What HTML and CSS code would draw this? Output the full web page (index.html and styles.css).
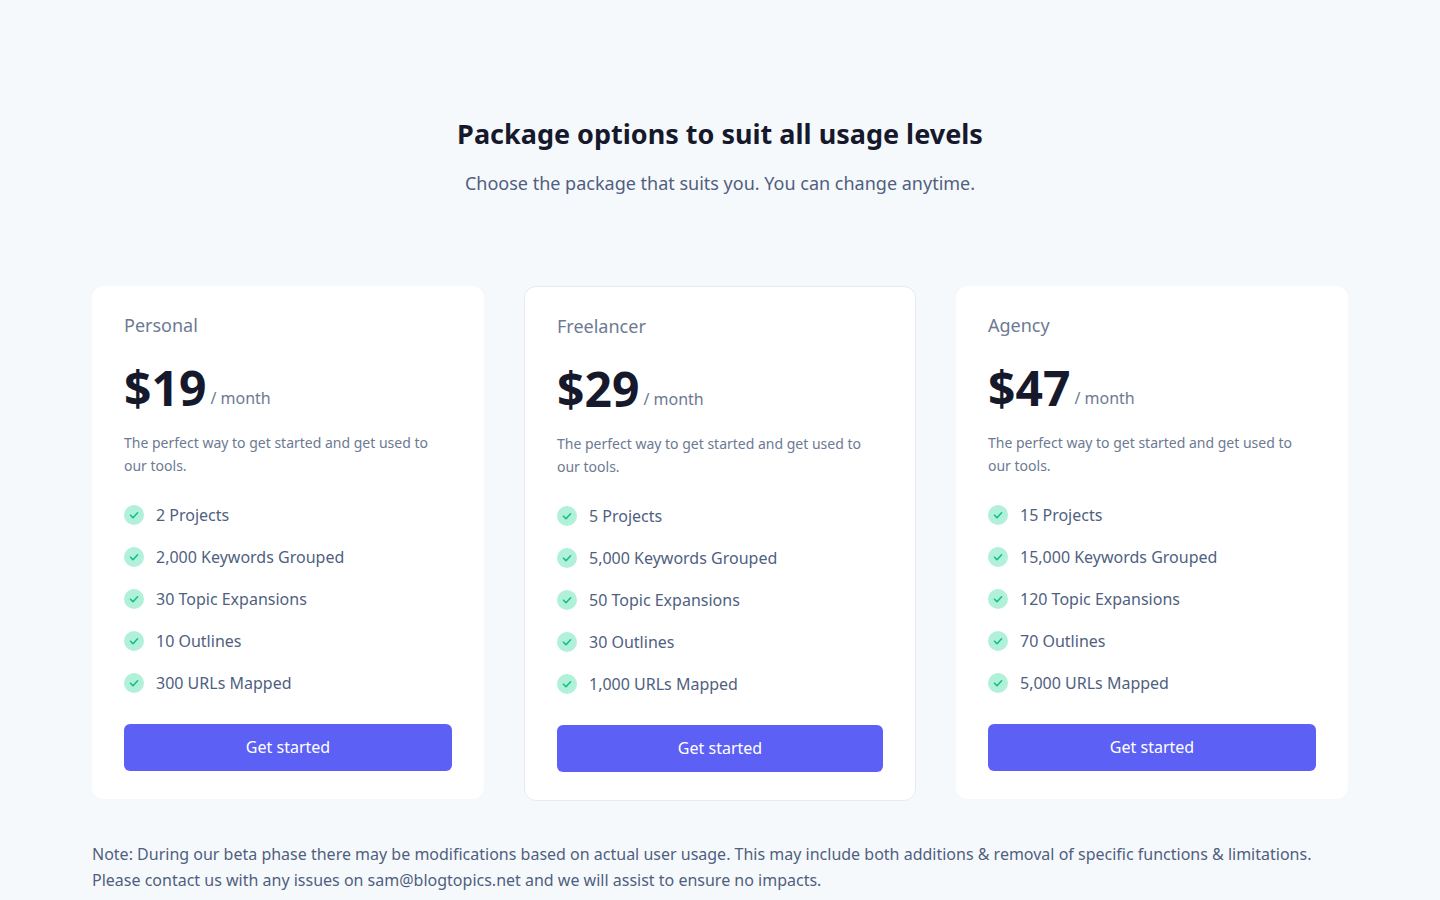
FILE: index.html
```html
<!DOCTYPE html>
<html lang="en">
<head>
    <meta charset="UTF-8">
    <meta name="viewport" content="width=device-width, initial-scale=1.0">
    <title>Pricing</title>
    <link rel="stylesheet" href="styles.css">
</head>
<body>

<!-- Check icon shared by all the feature lists -->
<svg class="sprite" aria-hidden="true">
    <symbol id="check" viewBox="0 0 20 20">
        <circle cx="10" cy="10" r="10" fill="#b1f1da"/>
        <path d="M6.5 10.2 L9 12.7 L13.6 7.8" fill="none" stroke="#0fc08c" stroke-width="1.6" stroke-linecap="round" stroke-linejoin="round"/>
    </symbol>
</svg>

<section class="pricing">
    <header class="pricing-header">
        <h2>Package options to suit all usage levels</h2>
        <p>Choose the package that suits you. You can change anytime.</p>
    </header>

    <div class="plans">
        <article class="plan">
            <h3>Personal</h3>
            <p class="price"><strong>$19</strong> <span>/ month</span></p>
            <p class="description">The perfect way to get started and get used to our tools.</p>
            <ul class="features">
                <li><svg class="check"><use href="#check"/></svg>2 Projects</li>
                <li><svg class="check"><use href="#check"/></svg>2,000 Keywords Grouped</li>
                <li><svg class="check"><use href="#check"/></svg>30 Topic Expansions</li>
                <li><svg class="check"><use href="#check"/></svg>10 Outlines</li>
                <li><svg class="check"><use href="#check"/></svg>300 URLs Mapped</li>
            </ul>
            <a class="button" href="#">Get started</a>
        </article>

        <article class="plan featured">
            <h3>Freelancer</h3>
            <p class="price"><strong>$29</strong> <span>/ month</span></p>
            <p class="description">The perfect way to get started and get used to our tools.</p>
            <ul class="features">
                <li><svg class="check"><use href="#check"/></svg>5 Projects</li>
                <li><svg class="check"><use href="#check"/></svg>5,000 Keywords Grouped</li>
                <li><svg class="check"><use href="#check"/></svg>50 Topic Expansions</li>
                <li><svg class="check"><use href="#check"/></svg>30 Outlines</li>
                <li><svg class="check"><use href="#check"/></svg>1,000 URLs Mapped</li>
            </ul>
            <a class="button" href="#">Get started</a>
        </article>

        <article class="plan">
            <h3>Agency</h3>
            <p class="price"><strong>$47</strong> <span>/ month</span></p>
            <p class="description">The perfect way to get started and get used to our tools.</p>
            <ul class="features">
                <li><svg class="check"><use href="#check"/></svg>15 Projects</li>
                <li><svg class="check"><use href="#check"/></svg>15,000 Keywords Grouped</li>
                <li><svg class="check"><use href="#check"/></svg>120 Topic Expansions</li>
                <li><svg class="check"><use href="#check"/></svg>70 Outlines</li>
                <li><svg class="check"><use href="#check"/></svg>5,000 URLs Mapped</li>
            </ul>
            <a class="button" href="#">Get started</a>
        </article>
    </div>

    <p class="note">Note: During our beta phase there may be modifications based on actual user usage. This may include both additions &amp; removal of specific functions &amp; limitations. Please contact us with any issues on sam@blogtopics.net and we will assist to ensure no impacts.</p>
</section>

</body>
</html>
```

FILE: styles.css
```css
* {
    box-sizing: border-box;
}

body {
    margin: 0;
    background-color: #f6f9fc;
    color: #505f7f;
    font-family: "Noto Sans", sans-serif;
    font-size: 16px;
    line-height: 26px;
}

h2, h3, p, ul {
    margin: 0;
    padding: 0;
}

.sprite {
    display: none;
}

.pricing {
    max-width: 1320px;
    margin: 0 auto;
    padding: 112px 32px 0;
}

.pricing-header {
    margin-bottom: 88px;
    text-align: center;
}

.pricing-header h2 {
    margin-bottom: 12px;
    color: #16192c;
    font-size: 27px;
    font-weight: 700;
    line-height: 44px;
}

.pricing-header p {
    font-size: 18px;
    line-height: 30px;
}

/* Plans */
.plans {
    display: grid;
    grid-template-columns: repeat(auto-fit, minmax(300px, 1fr));
    align-items: start;
    gap: 40px;
    margin-bottom: 40px;
}

.plan {
    padding: 24px 32px 28px;
    background-color: #fff;
    border-radius: 12px;
}

.plan.featured {
    border: 1px solid #e6e9f0;
}

.plan h3 {
    margin-bottom: 24px;
    color: #6c7a93;
    font-size: 18px;
    font-weight: 400;
    line-height: 30px;
}

.price {
    display: flex;
    align-items: flex-end;
    gap: 4px;
    margin-bottom: 19px;
    color: #6c7a93;
    line-height: 28px;
}

.price strong {
    color: #16192c;
    font-size: 48px;
    line-height: 48px;
}

.description {
    margin-bottom: 25px;
    color: #6c7a93;
    font-size: 14px;
    line-height: 23px;
}

.features {
    display: flex;
    flex-direction: column;
    gap: 16px;
    margin-bottom: 28px;
    list-style: none;
}

.features li {
    display: flex;
    align-items: center;
    gap: 12px;
}

.check {
    flex: none;
    width: 20px;
    height: 20px;
}

.button {
    display: block;
    padding: 10px 24px 11px;
    background-color: #5d60f5;
    border-radius: 6px;
    color: #fff;
    text-align: center;
    text-decoration: none;
}
```
